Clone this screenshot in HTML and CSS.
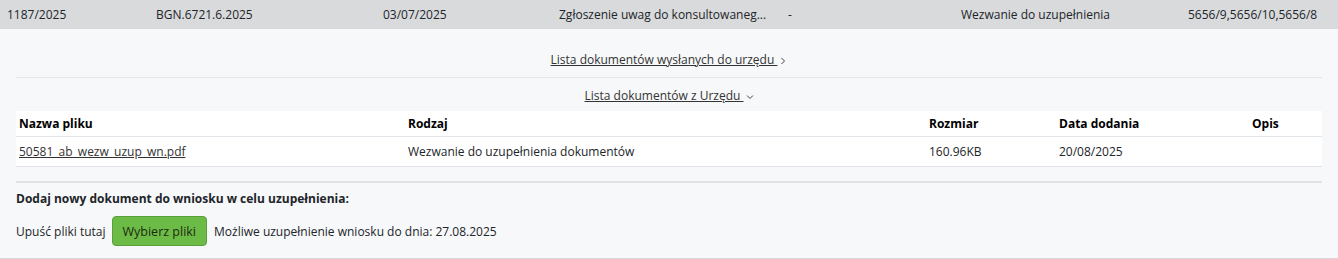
FILE: index.html
```html
<!DOCTYPE html>
<html lang="pl">
<head>
<meta charset="utf-8">
<title>Wniosek</title>
<link rel="stylesheet" href="styles.css">
</head>
<body>
<div class="page">
  <div class="summary">
    <div class="c">1187/2025</div>
    <div class="c">BGN.6721.6.2025</div>
    <div class="c">03/07/2025</div>
    <div class="c">Zgłoszenie uwag do konsultowaneg...</div>
    <div class="c">-</div>
    <div class="c">Wezwanie do uzupełnienia</div>
    <div class="c">5656/9,5656/10,5656/8</div>
  </div>
  <div class="details">
    <div class="toggle">
      <a class="tlink" href="#">Lista dokumentów wysłanych do urzędu <svg class="chev" viewBox="0 0 8 8" width="8" height="8"><path d="M2.5 1 L5.5 4 L2.5 7" fill="none" stroke="#444" stroke-width="1"/></svg></a>
    </div>
    <div class="toggle second">
      <a class="tlink" href="#">Lista dokumentów z Urzędu <svg class="chev" viewBox="0 0 8 8" width="8" height="8"><path d="M1 2.5 L4 5.5 L7 2.5" fill="none" stroke="#444" stroke-width="1"/></svg></a>
    </div>
    <table class="docs">
      <thead>
        <tr><th class="w1">Nazwa pliku</th><th class="w2">Rodzaj</th><th class="w3">Rozmiar</th><th class="w4">Data dodania</th><th class="w5">Opis</th></tr>
      </thead>
      <tbody>
        <tr><td><a href="#" class="flink">50581_ab_wezw_uzup_wn.pdf</a></td><td>Wezwanie do uzupełnienia dokumentów</td><td>160.96KB</td><td>20/08/2025</td><td></td></tr>
      </tbody>
    </table>
    <div class="upload">
      <div class="utitle">Dodaj nowy dokument do wniosku w celu uzupełnienia:</div>
      <div class="urow">
        <span>Upuść pliki tutaj</span>
        <button class="btn">Wybierz pliki</button>
        <span>Możliwe uzupełnienie wniosku do dnia: 27.08.2025</span>
      </div>
    </div>
  </div>
</div>
</body>
</html>
```
FILE: styles.css
```css
html, body { margin: 0; padding: 0; }
body {
  font-family: "Open Sans", "Noto Sans", sans-serif;
  font-size: 12px;
  color: #212529;
  background: #f7f8fa;
}
.summary {
  display: grid;
  grid-template-columns: 149px 227px 176px 229px 173px 227px 1fr;
  height: 29px;
  align-items: center;
  background: #d9dadc;
}
.summary .c { padding-left: 7px; white-space: nowrap; }
.details {
  padding: 0 16px;
  border-bottom: 1px solid #d5d6d8;
}
.toggle {
  text-align: center;
  padding-top: 22px;
  height: 26px;
  border-bottom: 1px solid #e3e5e8;
}
.toggle.second { padding-top: 9px; height: 24px; border-bottom: 0; }
.tlink { color: #333; text-decoration: underline; }
.chev { vertical-align: middle; margin-left: 2px; }
.docs {
  width: 100%;
  border-collapse: collapse;
  background: #fff;
}
.docs th, .docs td {
  text-align: left;
  padding: 0 3px;
  border-bottom: 1px solid #e1e4e8;
}
.docs th { height: 25px; font-weight: 700; color: #000; }
.docs td { height: 29px; }
.w1 { width: 383px; }
.w2 { width: 515px; }
.w3 { width: 124px; }
.w4 { width: 187px; }
.flink { color: #333; }
.upload {
  margin-top: 14px;
  border-top: 2px solid #e1e2e6;
  padding: 7px 0 12px;
}
.utitle { font-weight: 700; line-height: 18px; }
.urow {
  display: flex;
  align-items: center;
  gap: 6px;
  margin-top: 8px;
}
.urow .btn + span { margin-left: 1px; }
.btn {
  font: inherit;
  font-size: 12.5px;
  color: #1d2a12;
  background: #6dbb47;
  border: 1px solid #5aa03a;
  border-radius: 4px;
  height: 30px;
  padding: 0 10px;
}
```
